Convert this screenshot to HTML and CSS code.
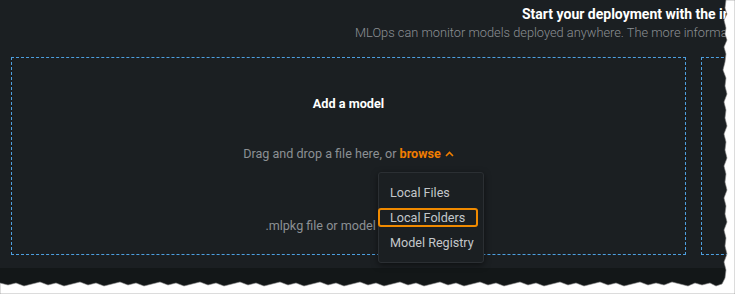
FILE: index.html
```html
<!DOCTYPE html>
<html lang="en">
<head>
    <meta charset="UTF-8">
    <title>Add a model</title>
    <link rel="stylesheet" href="styles.css">
</head>
<body>
    <div class="screen">
        <div class="panel">
            <div class="header">
                <h1>Start your deployment with the integration of your choice</h1>
                <p>MLOps can monitor models deployed anywhere. The more information you provide, the better.</p>
            </div>

            <div class="cards">
                <div class="dropzone">
                    <h2>Add a model</h2>
                    <p class="hint">Drag and drop a file here, or <span class="browse">browse
                        <svg width="9" height="6" viewBox="0 0 9 6"><path d="M1 5 L4.5 1.5 L8 5" fill="none" stroke="#f07d00" stroke-width="1.6"/></svg></span></p>
                    <p class="formats">.mlpkg file or model container</p>
                </div>
                <div class="dropzone second"></div>
            </div>
        </div>
        <div class="footer"></div>

        <ul class="menu">
            <li>Local Files</li>
            <li class="active">Local Folders</li>
            <li>Model Registry</li>
        </ul>

        <svg class="tear" width="735" height="294" viewBox="0 0 735 294">
            <path fill="#ffffff" stroke="#8a8a8a" stroke-width="0.6" d="M735 0 L726 0 L725 8 L727 14 L724 20 L726 28 L725 34 L727 40 L724 47 L726 54 L725 62 L723 70 L726 78 L725 86 L727 94 L724 102 L726 110 L725 118 L727 126 L724 134 L726 142 L725 150 L727 158 L724 166 L726 174 L725 182 L727 190 L724 198 L726 206 L725 214 L727 222 L724 230 L726 238 L725 246 L727 254 L724 262 L726 270 L725 278 L722 284 L716 286 L710 283 L702 285 L695 283 L688 286 L680 284 L672 282 L664 285 L656 283 L648 285 L640 282 L632 284 L624 286 L616 283 L608 285 L600 282 L592 284 L584 286 L576 283 L568 285 L560 282 L552 284 L544 286 L536 283 L528 285 L520 282 L512 284 L504 286 L496 283 L488 285 L480 282 L472 284 L464 286 L456 283 L448 285 L440 282 L432 284 L424 286 L416 283 L408 285 L400 282 L392 284 L384 286 L376 283 L368 285 L360 282 L352 284 L344 286 L336 283 L328 285 L320 282 L312 284 L304 286 L296 283 L288 285 L280 282 L272 284 L264 286 L256 283 L248 285 L240 282 L232 284 L224 286 L216 283 L208 285 L200 282 L192 284 L184 286 L176 283 L168 285 L160 282 L152 284 L144 286 L136 283 L128 285 L120 282 L112 284 L104 286 L96 283 L88 285 L80 282 L72 284 L64 286 L56 283 L48 285 L40 282 L32 284 L24 286 L16 283 L8 285 L0 283 L0 294 L735 294 Z"/>
        </svg>
    </div>
</body>
</html>
```

FILE: styles.css
```css
body {
    margin: 0;
    background-color: #ffffff;
    font-family: Roboto, "Liberation Sans", sans-serif;
}
.screen {
    position: relative;
    width: 735px;
    height: 294px;
    overflow: hidden;
    background-color: #131718;
}
.panel {
    height: 268px;
    background-color: #1b1f22;
}
.header {
    padding-top: 5px;
    white-space: nowrap;
}
.header h1 {
    margin: 0 0 0 522px;
    font-size: 14px;
    font-weight: 700;
    line-height: 18px;
    color: #ffffff;
}
.header p {
    margin: 2px 0 0 355px;
    font-size: 12.8px;
    font-weight: 300;
    line-height: 16px;
    color: #8c9094;
}
.cards {
    display: flex;
    gap: 15px;
    margin-top: 16px;
    padding-left: 11px;
}
.dropzone {
    flex: none;
    width: 673px;
    height: 196px;
    border: 1px dashed #4d9fe0;
    text-align: center;
}
.dropzone.second {
    width: 200px;
}
.dropzone h2 {
    margin: 38px 0 0;
    font-size: 12.7px;
    font-weight: 700;
    line-height: 16px;
    color: #ffffff;
}
.hint {
    margin: 34px 0 0;
    font-size: 12.6px;
    line-height: 16px;
    color: #8c9094;
}
.browse {
    font-weight: 700;
    color: #f07d00;
}
.browse svg {
    margin-left: 1px;
    vertical-align: 1px;
}
.formats {
    margin: 56px 0 0;
    font-size: 12.6px;
    line-height: 16px;
    color: #8c9094;
}
.footer {
    height: 26px;
}
.menu {
    position: absolute;
    left: 378px;
    top: 172px;
    width: 104px;
    margin: 0;
    padding: 10px 0 10px;
    list-style: none;
    background-color: #1b1f22;
    border: 1px solid #2b2f33;
    border-radius: 3px;
    box-shadow: 0 2px 6px rgba(0, 0, 0, 0.5);
    font-size: 12.6px;
    color: #c4c7ca;
    white-space: nowrap;
}
.menu li {
    margin: 0 5px 6px -1px;
    padding: 0 10px;
    line-height: 15px;
    border: 2px solid transparent;
    border-radius: 3px;
}
.menu li:last-child {
    margin-bottom: 0;
}
.menu li.active {
    border-color: #f08a00;
}
.tear {
    position: absolute;
    left: 0;
    top: 0;
}
```
